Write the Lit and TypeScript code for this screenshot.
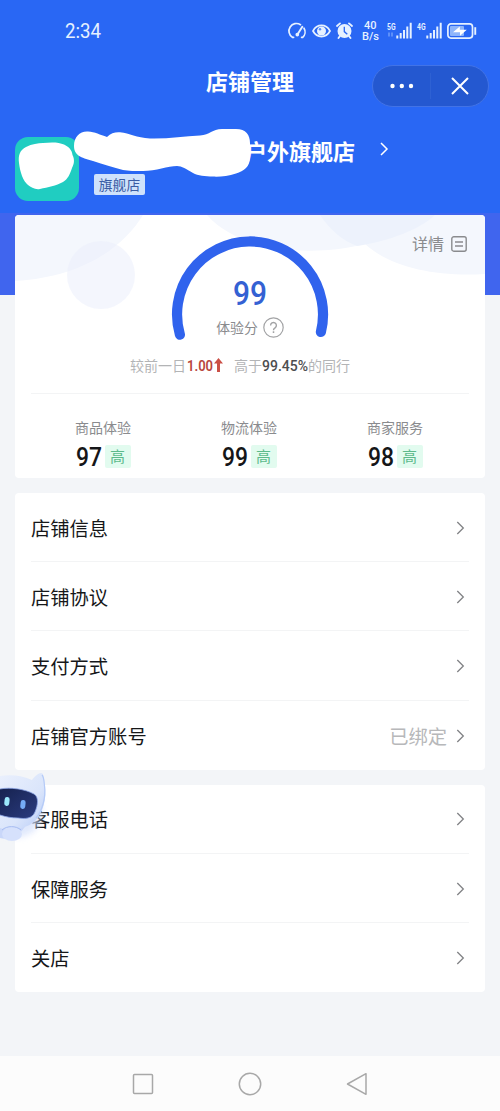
import { LitElement, html, css, svg, nothing } from "lit";
import { customElement, property } from "lit/decorators.js";

@customElement("din-number")
class DinNumber extends LitElement {
  @property() value = "";
  @property({ type: Number }) size = 14;
  @property({ type: Number }) width = 30;
  @property({ type: Number }) weight = 500;
  static styles = css`
    :host { display: inline-flex; }
    svg { display: block; overflow: visible; }
    text { font-family: Roboto, "Noto Sans CJK SC", sans-serif; fill: currentColor; }
  `;
  render() {
    const h = Math.round(this.size * 0.72);
    return html`<svg width=${this.width} height=${h}>
      <text x="0" y=${h} font-size=${this.size} font-weight=${this.weight}
        textLength=${this.width} lengthAdjust="spacingAndGlyphs">${this.value}</text>
    </svg>`;
  }
}

@customElement("status-bar")
class StatusBar extends LitElement {
  static styles = css`
    :host { display: flex; height: 61px; align-items: center; padding: 0 23px 0 65px; justify-content: space-between; color: #e6f1ff; box-sizing: border-box; }
    .icons { display: flex; align-items: center; }
    svg { display: block; overflow: visible; }
    .g { margin-right: 6px; }
    .e { margin-right: 5px; }
    .a { margin-right: 8px; }
    .rate { display: flex; flex-direction: column; align-items: center; gap: 3px; width: 18px; margin-right: 8px; margin-top: -1px; }
    .s { margin-right: 5px; }
    text { font: 700 9.500px Roboto, sans-serif; fill: currentColor; }
  `;
  signal(label: string, data: boolean) {
    return html`<svg class="s" width="25" height="17" viewBox="0 0 25 17">
      <text x="0" y="7.500" textLength="8.500" lengthAdjust="spacingAndGlyphs">${label}</text>
      ${data ? svg`<path d="M2 10.500v4m3-4v4" stroke="#6f9dfa" stroke-width="1.500"/>` : nothing}
      <path d="M10.300 16.500v-3M13.700 16.500V11M17 16.500V8M20.300 16.500V4.500M23.700 16.500V.8" stroke="currentColor" stroke-width="2"/>
    </svg>`;
  }
  render() {
    return html`
      <din-number value="2:34" size="20" width="36" weight="400"></din-number>
      <div class="icons">
        <svg class="g" width="17" height="16" viewBox="0 0 17 16" fill="none" stroke="currentColor" stroke-width="1.700" stroke-linecap="round">
          <path d="M4.600 14.300H3.400A7.200 7.200 0 0 1 11.500 1.700M15 5.200a7.200 7.200 0 0 1-1.300 9.100H12.600"/>
          <path d="M8.600 11.200L13.300 3.800" stroke-width="1.900"/><circle cx="8.300" cy="11.600" r="1" fill="currentColor"/>
        </svg>
        <svg class="e" width="19" height="14" viewBox="0 0 19 14">
          <path d="M1 7C5-.4 14-.4 18 7 14 14.400 5 14.400 1 7Z" fill="none" stroke="currentColor" stroke-width="1.700"/>
          <circle cx="9.500" cy="7" r="4.500" fill="currentColor"/><circle cx="8" cy="5.300" r="1.200" fill="#5c8cf6"/>
        </svg>
        <svg class="a" width="17" height="17" viewBox="0 0 17 17">
          <circle cx="8.500" cy="9" r="7" fill="currentColor"/>
          <path d="M1 4l3-2.600M16 4l-3-2.600M4 14l-1.500 2M13 14l1.500 2" stroke="currentColor" stroke-width="1.900" stroke-linecap="round"/>
          <path d="M8.300 4.800v4.800l3 2.600" stroke="#2967f4" stroke-width="1.300" fill="none"/>
        </svg>
        <div class="rate">
          <din-number value="40" size="11.500" width="12.500"></din-number>
          <din-number value="B/s" size="11.500" width="17"></din-number>
        </div>
        ${this.signal("5G", true)} ${this.signal("4G", false)}
        <svg width="30" height="16" viewBox="0 0 30 16">
          <rect x=".9" y=".9" width="24.600" height="14.200" rx="3" fill="none" stroke="currentColor" stroke-width="1.700"/>
          <rect x="3" y="3" width="14" height="10" rx="1" fill="#8fb6fb"/>
          <path d="M27.300 4.200h1.900v7.600h-1.900z" fill="currentColor"/>
          <path d="M6 9.200L12.800 3.500V6.800H19.800L13 12.700V9.200z" fill="#fff"/>
        </svg>
      </div>`;
  }
}

@customElement("menu-group")
class MenuGroup extends LitElement {
  @property({ attribute: false }) items: { label: string; note?: string }[] = [];
  static styles = css`
    :host { display: block; margin: 0 15px 15px; padding: 0 16px; background: #fff; border-radius: 4px; }
    .row { display: flex; align-items: center; height: 69.200px; box-sizing: border-box; border-bottom: 1px solid #f3f4f5; color: #161719; font-size: 19.300px; line-height: 28px; padding: 1px 4px 0 0; }
    .row:last-child { border-bottom: 0; }
    .label { flex: 1; }
    .note { color: #b7b8ba; margin-right: 9px; }
    svg { display: block; }
  `;
  render() {
    return this.items.map(
      (i) => html`<div class="row">
        <span class="label">${i.label}</span>
        ${i.note ? html`<span class="note">${i.note}</span>` : nothing}
        <svg width="9" height="14" viewBox="0 0 9 14"><path d="M1.300 1l6 6-6 6" fill="none" stroke="#808285" stroke-width="1.300"/></svg>
      </div>`
    );
  }
}

@customElement("score-card")
class ScoreCard extends LitElement {
  static styles = css`
    :host { display: block; position: relative; margin: 0 15px 15px; height: 263px; background: #fff; border-radius: 4px; overflow: hidden; color: #8a8b8e; }
    svg { display: block; }
    .decor { position: absolute; left: 0; top: 0; }
    .body { position: relative; display: flex; flex-direction: column; height: 100%; }
    .detail { position: absolute; right: 18px; top: 18px; display: flex; align-items: center; gap: 7px; font-size: 16px; line-height: 24px; }
    .detail span { margin-top: -2px; }
    .gauge { display: grid; justify-items: center; height: 127px; padding-top: 13px; box-sizing: border-box; }
    .gauge > * { grid-area: 1 / 1; }
    .inner { display: flex; flex-direction: column; align-items: center; padding-top: 53px; }
    .score { color: #3461d3; }
    .caption { display: flex; align-items: center; gap: 5px; margin-top: 12px; font-size: 13.900px; line-height: 22px; }
    .caption span { margin-top: -1px; }
    .compare { display: flex; justify-content: center; align-items: center; height: 20px; margin: 13px 20px 0 0; font-size: 14px; color: #b3b4b6; }
    .up { color: #b8463e; margin-left: 1px; }
    .arrow { margin: 0 11px 0 1px; }
    .pct { color: #4d4e50; }
    .rule { height: 1px; margin: 18px 16px 0; background: #f3f4f5; }
    .metrics { display: grid; grid-template-columns: repeat(3, 1fr); margin: 22px 17px 0 15px; }
    .metric { display: flex; flex-direction: column; align-items: center; font-size: 14px; line-height: 22px; }
    .value { display: flex; align-items: center; gap: 3px; margin-top: 7px; color: #151618; }
    .high { width: 26px; height: 23px; line-height: 22px; text-align: center; background: #e2fbef; color: #5cba8b; font-size: 15px; border-radius: 2px; }
  `;
  render() {
    return html`
      <svg class="decor" width="470" height="150" viewBox="0 0 470 150">
        <path d="M0 0H128C110 30 70 62 0 66Z" fill="#f4f7fd"/>
        <circle cx="86" cy="60" r="34" fill="#ebeffc" opacity=".55"/>
        <path d="M192 0C225 38 300 42 350 29 375 52 420 62 470 59V0Z" fill="#f4f7fd"/>
        <path d="M305 0C315 15 328 26 342 31 375 26 405 14 420 0Z" fill="#edf2fc"/>
      </svg>
      <div class="body">
        <div class="gauge">
          <svg width="170" height="115" viewBox="0 0 170 115">
            <path d="M14.900 106.700A73 73 0 1 1 155.900 104" fill="none" stroke="#3063ed" stroke-width="10.200" stroke-linecap="round"/>
          </svg>
          <div class="inner">
            <din-number class="score" value="99" size="34" width="34" weight="500"></din-number>
            <div class="caption"><span>体验分</span>
              <svg width="21" height="21" viewBox="0 0 21 21" fill="none" stroke="#a2a3a5" stroke-width="1.200">
                <circle cx="10.500" cy="10.500" r="9.700"/>
                <path d="M7.600 8.400a2.900 2.900 0 1 1 4.500 2.400c-1.100.7-1.600 1.100-1.600 2.400" stroke-width="1.400"/><path d="M10.500 14.300v1.700" stroke-width="1.500"/>
              </svg>
            </div>
          </div>
        </div>
        <div class="compare"><span>较前一日</span><din-number class="up" value="1.00" size="15" width="26" weight="600"></din-number>
          <svg class="arrow" width="9" height="14" viewBox="0 0 9 14"><path d="M4.500 0L9 5.500H6V14H3V5.500H0Z" fill="#cb5047"/></svg><span>高于</span><din-number class="pct" value="99.45%" size="15" width="46" weight="500"></din-number><span>的同行</span>
        </div>
        <div class="rule"></div>
        <div class="metrics">
          ${[["商品体验", "97"], ["物流体验", "99"], ["商家服务", "98"]].map(
            ([label, v]) => html`<div class="metric">
              <span>${label}</span>
              <div class="value"><din-number value=${v} size="25" width="26" weight="500"></din-number><span class="high">高</span></div>
            </div>`
          )}
        </div>
        <div class="detail"><span>详情</span>
          <svg width="16" height="16" viewBox="0 0 16 16" fill="none" stroke="#8a8b8e" stroke-width="1.400"><rect x=".8" y=".8" width="14.400" height="14.400" rx="2"/><path d="M4 6h8M4 10h8"/></svg>
        </div>
      </div>`;
  }
}

@customElement("app-root")
class AppRoot extends LitElement {
  static styles = css`
    :host { display: flex; flex-direction: column; position: relative; height: 1111px; overflow: hidden; font-family: "Noto Sans CJK SC", sans-serif; background: linear-gradient(#2967f4 0 213px, #4065ee 213px 295.500px, #f3f5f8 295.500px); }
    svg { display: block; }
    .title-bar { display: grid; grid-template-columns: 1fr auto 1fr; align-items: center; height: 50px; padding: 0 11px; color: #fff; }
    .title { grid-column: 2; font-size: 22px; font-weight: 700; line-height: 30px; margin-top: -12px; }
    .capsule { justify-self: end; display: grid; grid-template-columns: 1fr 1px 1fr; align-items: center; justify-items: center; width: 117px; height: 42px; box-sizing: border-box; border: 1px solid #4273e6; border-radius: 21px; background: #2458d0; }
    .bar { width: 1px; height: 26px; background: #2e61d3; }
    .shop { display: flex; position: relative; height: 78px; padding: 0 15px; margin-top: 26px; color: #fff; }
    .avatar { width: 64px; height: 64px; border-radius: 13px; background: #20cdc1; }
    .info { display: flex; flex-direction: column; align-items: flex-start; margin-left: 15px; }
    .name { display: flex; align-items: center; gap: 25px; padding-left: 151px; height: 30px; font-size: 22px; font-weight: 700; line-height: 30px; margin-top: -2px; }
    .name svg { margin-top: -2px; }
    .tag { margin-top: 9px; width: 51px; height: 21px; line-height: 20px; text-align: center; border-radius: 2px; background: #cfe2fb; color: #3a5ca4; font-size: 13.800px; }
    .smear { position: absolute; left: 0; top: -17px; }
    .robot { position: absolute; left: 0; top: 765px; }
    .nav { display: flex; justify-content: center; align-items: center; gap: 84px; height: 55px; margin-top: auto; background: #fcfcfc; }
  `;
  render() {
    return html`
      <status-bar></status-bar>
      <div class="title-bar">
        <div class="title">店铺管理</div>
        <div class="capsule">
          <svg width="24" height="6" viewBox="0 0 24 6" fill="#fff"><circle cx="2.500" cy="3" r="2.200"/><circle cx="11.800" cy="3" r="2.200"/><circle cx="21" cy="3" r="2.200"/></svg>
          <span class="bar"></span>
          <svg width="18" height="18" viewBox="0 0 18 18"><path d="M1 1l16 16M17 1L1 17" stroke="#fff" stroke-width="2"/></svg>
        </div>
      </div>
      <div class="shop">
        <div class="avatar"></div>
        <div class="info">
          <div class="name">户外旗舰店<svg width="9" height="14" viewBox="0 0 9 14"><path d="M1 1l6 6-6 6" fill="none" stroke="#fff" stroke-width="1.500"/></svg></div>
          <div class="tag">旗舰店</div>
        </div>
        <svg class="smear" width="260" height="85" viewBox="0 120 260 85" fill="#fff">
          <path d="M74 146C74 137 80 131 88 131.600 95 132 100 135 107 137 111 133 115 132 120 132.300 130 133 136 138 150 138.500 168 139 184 136 200 135.500 210 135 212 129 222 129H236C246 129 250 135 250 143V157C250 167 244 171 236 173.500 228 176 220 177 213 176.600 205 176 198 176 193 173 186 169 182 166 177 166 168 166 156 171 143 171 136 171 128 171 123 170 112 167 102 164 93 161 84 158 74 157 74 146Z"/>
          <path d="M19 163C18 155 20 150 26 147 32 144 38 143 43 143 51 142 59 142 64 144.500 69 147 72 150 72.500 155 75 160 74 164 72 168 70 174 68 179 63 182 56 186 48 187 40 189 35 190 31 187 28 185 23 181 20 172 19 163Z"/>
        </svg>
      </div>
      <score-card></score-card>
      <menu-group .items=${[{ label: "店铺信息" }, { label: "店铺协议" }, { label: "支付方式" }, { label: "店铺官方账号", note: "已绑定" }]}></menu-group>
      <menu-group .items=${[{ label: "客服电话" }, { label: "保障服务" }, { label: "关店" }]}></menu-group>
      <svg class="robot" width="55" height="85" viewBox="0 765 55 85">
        <defs>
          <linearGradient id="shell" x1="0" y1="0" x2="1" y2="1"><stop offset="0" stop-color="#eaf0fd"/><stop offset=".6" stop-color="#dae5fb"/><stop offset="1" stop-color="#b4c9f7"/></linearGradient>
          <linearGradient id="visor" x1="0" y1="0" x2="1" y2="1"><stop offset="0" stop-color="#16224f"/><stop offset="1" stop-color="#2b3c80"/></linearGradient>
          <filter id="soft" x="-50%" y="-50%" width="200%" height="200%"><feGaussianBlur stdDeviation="3"/></filter>
        </defs>
        <ellipse cx="18" cy="812" rx="24" ry="25" fill="#d3dffb" opacity=".7" filter="url(#soft)"/>
        <path d="M0 820H28C24 833 12 841 0 838Z" fill="#c9d7f9"/>
        <path d="M0 776C12 774 23 776 32 780 34 777 38 773 41 773 44 773 44 779 45 785 47 798 43 813 35 821 25 830 10 831 0 828Z" fill="url(#shell)"/>
        <path d="M42 775C44 777 44 781 44.500 786 46 798 42 811 36 818" fill="none" stroke="#b4caf7" stroke-width="1.200"/>
        <path d="M0 789C10 787 25 789 34 794 39 797 38 805 35 812 32 819 25 819 18 818 12 818 6 817 0 815Z" fill="url(#visor)"/>
        <path d="M0 789C10 787 25 789 34 794 39 797 38 805 35 812 32 819 25 819 18 818 12 818 6 817 0 815" fill="none" stroke="#8ca4e4" stroke-width=".8"/>
        <rect x="4.500" y="797" width="5" height="9" rx="2.400" fill="#9be8fb" transform="rotate(6 7 801)"/>
        <rect x="20.500" y="800" width="5" height="9" rx="2.400" fill="#75abf6" transform="rotate(6 23 804)"/>
        <ellipse cx="12" cy="834" rx="10" ry="7" fill="#d6e1fc"/><path d="M2 830c5-4.500 14-4.500 19 0" fill="none" stroke="#a5bbf2" stroke-width="1"/>
      </svg>
      <div class="nav">
        <svg width="22" height="24" viewBox="0 0 22 24"><rect x="1.500" y="2.500" width="19" height="19" rx="1" fill="none" stroke="#a8a8a8" stroke-width="1.500"/></svg>
        <svg width="24" height="24" viewBox="0 0 24 24"><circle cx="12" cy="12" r="10.700" fill="none" stroke="#a8a8a8" stroke-width="1.500"/></svg>
        <svg width="22" height="24" viewBox="0 0 22 24"><path d="M20 1.700V22.300L1.500 12Z" fill="none" stroke="#a8a8a8" stroke-width="1.500" stroke-linejoin="round"/></svg>
      </div>`;
  }
}
